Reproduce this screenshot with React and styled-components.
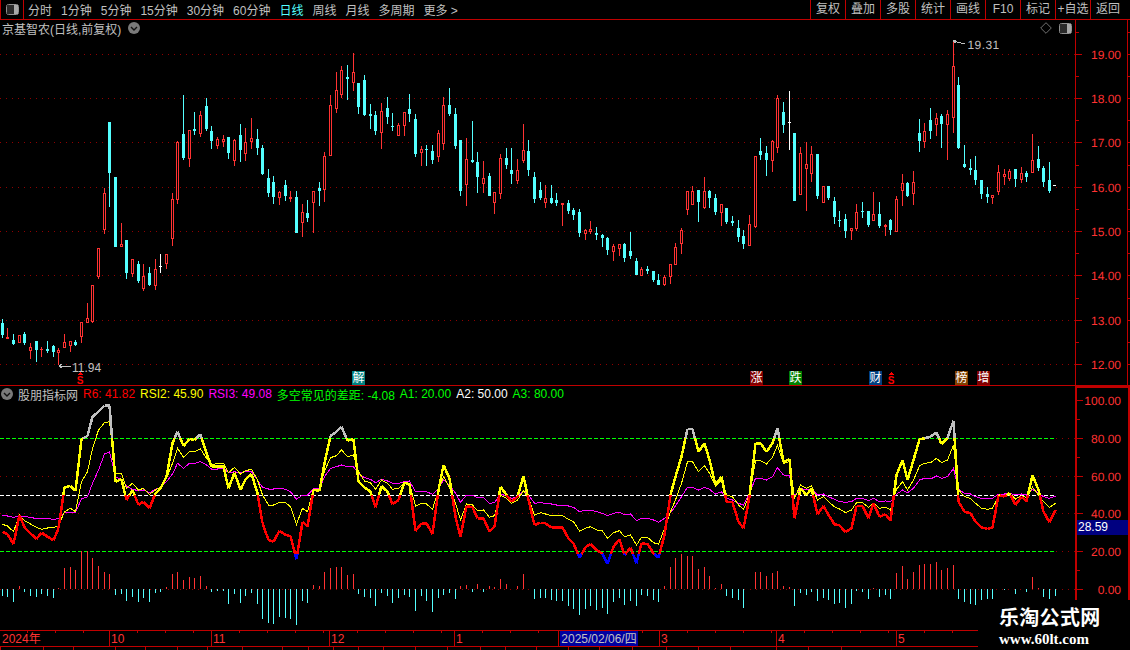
import React from "react";
import styled, { createGlobalStyle } from "styled-components";

const RED = "#ff3232";
const LINE = "#c00000";
const CYAN = "#54ffff";
const GREY = "#c0c0c0";
const FONT = `"Liberation Sans", "Noto Sans CJK SC", sans-serif`;

const GlobalStyle = createGlobalStyle`
  html, body {
    margin: 0;
    background: #000;
  }
`;

const Page = styled.div`
  position: relative;
  display: flex;
  flex-direction: column;
  width: 1130px;
  height: 650px;
  overflow: hidden;
  background: #000;
  color: ${GREY};
  font-family: ${FONT};
  font-size: 12px;
`;

const Toolbar = styled.div`
  display: flex;
  align-items: center;
  flex: none;
  height: 20px;
  box-sizing: border-box;
  border-bottom: 1px solid ${LINE};
  padding-right: 5px;
`;

const LayoutToggle = styled.div`
  display: flex;
  align-items: center;
  justify-content: center;
  width: 24px;
  height: 19px;
  box-sizing: border-box;
  border-left: 1px solid ${LINE};
  border-right: 1px solid ${LINE};
`;

const Periods = styled.div`
  display: flex;
  gap: 9px;
  margin-left: 4px;
`;

const Period = styled.span`
  color: ${(p) => (p.$active ? CYAN : GREY)};
  white-space: nowrap;
`;

const Actions = styled.div`
  display: flex;
  margin-left: auto;
`;

const Action = styled.div`
  width: 35px;
  height: 19px;
  box-sizing: border-box;
  border-left: 1px solid ${LINE};
  text-align: center;
  line-height: 19px;
  white-space: nowrap;
`;

const PriceRow = styled.div`
  display: flex;
  flex: none;
  height: 366px;
  box-sizing: border-box;
  border-bottom: 1px solid ${LINE};
`;

const IndicatorRow = styled.div`
  display: flex;
  flex: none;
  height: 244px;
`;

const Plot = styled.div`
  position: relative;
  display: flex;
  flex-direction: column;
  flex: none;
  width: 1075px;
`;

const Legend = styled.div`
  display: flex;
  align-items: center;
  flex: none;
  gap: ${(p) => p.$gap || 0}px;
  height: 18px;
  box-sizing: border-box;
  padding: 0 3px 2px ${(p) => p.$inset || 2}px;
  white-space: nowrap;
`;

const LegendName = styled.span`
  margin-right: ${(p) => p.$space || 0}px;
`;

const LegendValue = styled.span`
  color: ${(p) => p.$color};
`;

const LegendTools = styled.div`
  display: flex;
  align-items: center;
  gap: 7px;
  margin-left: auto;
`;

const Chart = styled.svg`
  display: block;
  flex: none;
  font-family: ${FONT};
  font-size: 12px;
`;

const Axis = styled.div`
  position: relative;
  flex: none;
  width: 55px;
`;

const Badge = styled.span`
  position: absolute;
  top: 351px;
  left: ${(p) => p.$x}px;
  width: 13px;
  height: 14px;
  background: ${(p) => p.$bg};
  color: #fff;
  font-size: 12px;
  line-height: 14px;
  text-align: center;
`;

const ValueTag = styled.div`
  position: absolute;
  top: 134px;
  left: 2px;
  right: 2px;
  height: 15px;
  padding-left: 1px;
  background: #000080;
  color: #fff;
  line-height: 15px;
`;

const TimeAxis = styled.div`
  position: relative;
  display: flex;
  flex: none;
  width: 978px;
  height: 17px;
  box-sizing: border-box;
  border-top: 1px solid ${LINE};
  border-bottom: 1px solid ${LINE};
`;

const TimeCell = styled.div`
  flex: none;
  width: ${(p) => p.$w}px;
  box-sizing: border-box;
  padding-left: ${(p) => (p.$first ? 2 : 1)}px;
  border-left: ${(p) => (p.$first ? "none" : `1px solid ${LINE}`)};
  background: repeating-linear-gradient(90deg, transparent 0 27px, ${LINE} 27px 28px) top left / 100% 2px no-repeat;
  color: ${RED};
  line-height: 16px;
`;

const SelectedDate = styled.div`
  position: absolute;
  top: 0;
  left: 560px;
  width: 78px;
  height: 15px;
  background: #0000a0;
  color: ${GREY};
  line-height: 16px;
  text-align: center;
`;

const StatusStrip = styled.div`
  display: flex;
  flex: 1;
  overflow: hidden;
`;

const StatusCell = styled.div`
  flex: none;
  width: ${(p) => p.$w}px;
  box-sizing: border-box;
  border-left: 1px solid ${LINE};
`;

const Watermark = styled.div`
  position: absolute;
  right: 0;
  bottom: 0;
  display: flex;
  flex-direction: column;
  width: 152px;
  height: 50px;
  box-sizing: border-box;
  padding: 6px 0 0 21px;
  background: #000;
  color: #fff;
  font-weight: 700;
  white-space: nowrap;
`;

const WatermarkTitle = styled.span`
  font-size: 20px;
  line-height: 24px;
  letter-spacing: 0.3px;
`;

const WatermarkUrl = styled.span`
  margin-top: 2px;
  font-family: "Liberation Serif", serif;
  font-size: 15px;
  line-height: 15px;
`;

const xAt = (i) => Math.floor(2.3 + i * 5.66);

// type, body top, body bottom, wick top, wick bottom (page pixels)
const candles = [
  ["c",323,335,319,338],["r",337,339,328,339],["c",340,344,334,345],["r",335,343,335,343],["c",334,343,332,345],
  ["r",347,351,343,359],["c",341,350,341,362],["r",349,350,347,357],["c",349,351,341,353],["c",346,352,345,357],
  ["r",350,353,348,365],["r",342,348,334,348],["r",341,346,341,352],["c",342,345,340,346],["r",322,337,322,343],
  ["r",318,323,303,323],["r",285,322,285,323],["r",248,277,248,279],["r",193,230,188,234],["c",122,173,122,207],
  ["c",177,247,177,247],["r",244,247,223,247],["c",240,273,240,279],["r",259,274,259,277],["c",264,281,261,283],
  ["r",276,289,264,291],["c",273,285,267,286],["r",269,286,259,290],["w",266,267,254,273],["r",254,264,254,269],
  ["r",199,239,193,246],["r",142,200,141,204],["c",134,158,95,160],["r",130,159,130,167],["c",129,131,112,135],
  ["r",115,134,111,137],["c",106,129,98,131],["c",131,141,126,149],["r",139,146,137,149],["r",139,142,135,147],
  ["c",137,153,137,159],["r",140,161,139,166],["c",135,150,124,162],["r",142,154,128,161],["r",138,142,118,149],
  ["c",139,148,129,155],["c",148,174,145,175],["c",178,193,169,197],["c",182,197,176,204],["r",192,198,191,205],
  ["c",185,196,180,201],["r",197,199,191,202],["c",197,233,191,233],["r",212,223,204,237],["c",213,218,200,222],
  ["r",191,203,191,233],["c",188,191,182,206],["r",156,190,152,202],["r",105,156,95,156],["r",90,109,72,113],
  ["r",70,95,66,98],["c",77,79,65,100],["r",72,83,53,91],["c",83,107,83,114],["c",80,115,75,116],
  ["c",114,116,104,129],["c",115,131,111,135],["r",111,133,103,149],["c",108,117,97,124],["c",126,127,113,131],
  ["r",125,136,123,136],["r",112,126,112,136],["c",109,114,94,122],["c",119,154,114,157],["r",149,153,146,166],
  ["c",149,150,145,166],["c",151,160,145,164],["r",133,157,130,162],["r",105,144,97,150],["c",105,114,88,116],
  ["c",114,146,108,149],["c",140,191,140,196],["r",159,185,138,206],["c",160,162,121,163],["c",162,177,152,193],
  ["r",178,184,161,193],["c",176,196,173,196],["r",192,203,192,214],["r",158,194,154,199],["c",158,165,148,169],
  ["c",170,174,148,184],["r",170,181,159,184],["r",150,161,124,163],["c",151,170,140,176],["c",177,199,172,203],
  ["c",190,198,182,200],["r",198,203,185,208],["c",198,203,185,204],["c",200,203,193,206],["r",203,205,203,226],
  ["c",203,211,200,214],["c",210,215,208,220],["c",212,233,209,237],["r",230,234,229,240],["r",229,232,221,234],
  ["c",233,235,227,240],["c",235,238,234,247],["c",238,250,237,255],["r",246,252,244,261],["r",244,249,244,256],
  ["c",244,258,243,262],["c",251,256,232,259],["c",261,275,258,275],["r",269,276,267,276],["c",269,271,266,274],
  ["c",271,280,271,282],["c",280,285,274,285],["r",277,285,275,286],["r",264,277,264,284],["r",247,265,243,265],
  ["r",230,244,228,254],["r",191,210,191,215],["r",191,205,186,205],["c",190,202,190,222],["r",191,208,177,209],
  ["c",191,198,190,208],["c",198,212,194,215],["r",204,213,204,226],["c",208,222,208,224],["c",221,223,216,226],
  ["c",228,237,220,242],["c",236,244,230,249],["r",224,246,215,246],["r",156,227,156,228],["c",151,155,138,160],
  ["c",153,160,146,176],["r",141,161,140,172],["r",98,148,95,153],["c",112,125,102,133],["w",122,123,91,150],
  ["c",133,201,133,201],["r",153,195,147,195],["r",164,169,142,211],["r",154,174,146,182],["c",154,196,154,199],
  ["r",186,203,186,203],["c",186,198,186,200],["c",201,217,197,224],["c",220,221,211,227],["c",219,231,214,238],
  ["r",228,231,228,240],["r",212,229,204,231],["c",211,212,202,218],["c",211,225,211,227],["r",214,221,192,221],
  ["c",214,226,202,228],["r",225,227,224,236],["c",220,230,219,235],["r",199,232,196,232],["r",183,191,174,206],
  ["c",183,196,182,197],["r",182,194,171,205],["c",133,141,119,152],["r",131,142,123,148],["c",120,131,108,139],
  ["r",118,125,113,136],["c",116,124,114,148],["r",114,125,110,160],["r",66,118,40,133],["c",85,148,77,149],
  ["c",164,167,145,168],["c",168,170,159,175],["c",170,180,156,185],["c",180,194,180,199],["c",194,197,187,203],
  ["r",195,198,195,204],["r",172,192,165,195],["r",174,177,169,185],["r",171,179,169,181],["c",169,179,169,187],
  ["r",173,180,167,183],["c",173,177,171,182],["r",160,173,134,173],["c",159,168,146,171],["c",168,182,166,187],
  ["c",180,191,162,193],
];

// RSI lines, traced at 3x from y = 400
const rsi6 = [
  395,403,432,345,382,400,417,398,410,421,385,262,258,272,117,108,50,35,17,17,
  245,238,300,270,315,305,325,280,265,230,130,95,138,117,120,103,160,200,200,200,
  265,218,270,238,222,280,370,420,425,392,405,408,478,365,380,270,272,190,108,95,
  80,122,118,245,262,275,322,258,275,313,300,248,253,393,370,370,402,270,195,235,
  350,410,318,322,355,355,395,380,260,285,305,290,228,300,375,368,370,383,383,383,
  415,430,473,442,432,450,462,492,440,418,465,443,490,430,432,460,473,405,285,230,
  170,87,87,155,130,180,255,230,305,307,365,385,290,130,130,155,130,85,185,178,
  355,265,285,265,343,318,345,373,376,397,385,318,318,355,310,350,343,362,225,180,
  240,180,118,115,110,97,132,115,62,305,335,340,365,382,387,382,285,290,280,315,
  290,305,225,270,335,367,330,
];

const rsi2 = [
  373,378,395,345,362,372,382,388,384,382,378,335,325,335,245,215,145,90,68,65,
  222,220,265,250,270,265,283,270,262,235,190,145,172,155,155,147,175,195,190,190,
  218,202,222,212,208,240,285,315,315,307,308,320,373,325,335,268,268,213,173,167,
  150,170,165,215,243,248,268,240,250,268,265,247,250,318,310,312,328,270,230,262,
  310,360,312,315,332,330,352,347,285,295,310,300,272,295,345,338,342,347,347,347,
  358,365,393,385,380,390,393,415,398,392,410,405,435,412,412,428,433,385,335,300,
  250,185,185,215,197,220,258,240,285,290,315,328,285,183,182,192,172,135,190,185,
  295,255,265,258,300,290,305,320,327,338,330,308,308,322,310,325,322,330,268,245,
  270,240,198,190,188,175,188,180,135,270,290,295,310,325,328,325,290,290,280,297,
  287,293,262,285,305,322,310,
];

const rsi3 = [
  346,348,352,348,350,352,356,356,356,358,356,338,337,337,297,290,250,210,162,155,
  230,240,258,268,272,270,278,268,262,245,222,190,205,190,190,185,195,207,207,205,
  218,215,218,215,215,240,262,267,267,265,268,275,298,285,285,266,265,230,205,200,
  195,200,200,220,233,238,248,238,243,250,250,245,243,275,275,275,283,265,240,255,
  280,307,285,285,293,293,310,308,282,288,295,290,272,285,310,308,310,312,315,315,
  318,322,335,330,330,335,340,347,340,337,345,342,362,355,355,360,367,355,338,318,
  290,262,262,270,262,268,282,275,295,300,310,315,280,235,235,240,230,203,225,227,
  288,265,270,268,285,282,290,298,305,307,305,295,295,302,295,305,303,305,283,270,
  278,265,240,235,237,228,235,230,205,268,280,282,290,295,295,295,282,282,280,285,
  282,285,268,280,290,295,288,
];

// signed bar heights around the zero line, up is red
const bars = [
  -7,-8,-13,3,-3,-7,-8,-5,-7,-9,1,21,22,19,38,38,31,23,17,15,
  -6,-5,-12,-8,-13,-9,-13,-4,-3,2,15,17,9,12,11,13,3,-3,-2,-2,
  -15,-5,-14,-7,-4,-15,-30,-34,-35,-28,-29,-30,-36,-12,-14,4,3,17,21,22,
  22,14,15,-5,-8,-9,-17,-4,-7,-14,-9,-6,-8,-22,-7,-12,-23,-9,-6,-4,
  -10,3,4,-3,5,-3,3,2,10,5,0,3,15,0,-10,-9,-9,-11,-12,-12,
  -17,-20,-26,-20,-17,-21,-19,-25,-13,-9,-16,-12,-17,-6,-7,-11,-13,3,22,31,
  35,33,33,20,22,13,1,5,-7,-9,-11,-19,0,17,17,13,16,18,3,2,
  -17,-4,-6,-3,-12,-9,-11,-15,-14,-19,-15,-2,-3,-10,1,-8,-6,-10,16,23,
  10,17,24,25,25,27,19,21,24,-10,-13,-15,-16,-11,-10,-10,0,-1,0,-5,
  0,-3,12,1,-8,-10,-7,
];

const ZERO_Y = 589;
const toY = (v) => 400 + v / 3;
const seriesPoints = (values) => values.map((v, i) => `${xAt(i) + 0.5},${toY(v).toFixed(1)}`).join(" ");

const BAND_LIMITS = [438.3, 495.3, 554];

const bandColor = (y) => {
  if (y < BAND_LIMITS[0]) return GREY;
  if (y < BAND_LIMITS[1]) return "#ffff00";
  if (y < BAND_LIMITS[2]) return "#ff0000";
  return "#0000ff";
};

// the RSI6 line takes its colour from the band it runs through
const rsi6Segments = () => {
  const out = [];
  for (let i = 0; i < rsi6.length - 1; i++) {
    const x1 = xAt(i) + 0.5;
    const x2 = xAt(i + 1) + 0.5;
    const y1 = toY(rsi6[i]);
    const y2 = toY(rsi6[i + 1]);
    const cuts = BAND_LIMITS.filter((l) => (y1 - l) * (y2 - l) < 0).map((l) => (l - y1) / (y2 - y1));
    const stops = [0, ...cuts.sort((a, b) => a - b), 1];
    for (let s = 0; s < stops.length - 1; s++) {
      const a = stops[s];
      const b = stops[s + 1];
      const mid = y1 + (y2 - y1) * ((a + b) / 2);
      out.push({
        x1: x1 + (x2 - x1) * a,
        y1: y1 + (y2 - y1) * a,
        x2: x1 + (x2 - x1) * b,
        y2: y1 + (y2 - y1) * b,
        color: bandColor(mid),
      });
    }
  }
  return out;
};

const priceGrid = [54, 98, 142, 187, 231, 275, 320, 364];
const priceLabels = ["19.00", "18.00", "17.00", "16.00", "15.00", "14.00", "13.00", "12.00"];
const rsiScale = [
  [400, "100.00"],
  [438, "80.00"],
  [476, "60.00"],
  [513, "40.00"],
  [551, "20.00"],
  [589, "0.00"],
];

const periods = ["分时", "1分钟", "5分钟", "15分钟", "30分钟", "60分钟", "日线", "周线", "月线", "多周期", "更多 >"];
const actions = ["复权", "叠加", "多股", "统计", "画线", "F10", "标记", "+自选", "返回"];
const legend = [
  ["#ff0000", "R6: 41.82"],
  ["#ffff00", "RSI2: 45.90"],
  ["#ff00ff", "RSI3: 49.08"],
  ["#00ff00", "多空常见的差距: -4.08"],
  ["#00ff00", "A1: 20.00"],
  ["#ffffff", "A2: 50.00"],
  ["#00ff00", "A3: 80.00"],
];
const badges = [
  [352, "#008080", "解"],
  [750, "#800000", "涨"],
  [789, "#008000", "跌"],
  [869, "#004080", "财"],
  [955, "#804000", "榜"],
  [977, "#800000", "增"],
];
const months = [
  [109, "2024年"],
  [102, "10"],
  [118, "11"],
  [125, "12"],
  [104, "1"],
  [101, ""],
  [117, "3"],
  [120, "4"],
  [82, "5"],
];
const stripCells = [
  43, 30, 42, 30, 32, 30, 35, 40, 26, 25, 25, 25, 32, 32, 33, 25, 31, 32, 31, 33, 34, 32, 32, 46, 32, 33, 106,
];

const PanelIcon = () => (
  <svg width="13" height="11" viewBox="0 0 13 11">
    <rect x="0.5" y="0.5" width="12" height="10" rx="2" fill="#111" stroke="#909090" />
    <rect x="8" y="1" width="4" height="9" fill="#a8a8a8" />
    <rect x="1" y="1" width="7" height="9" fill="#2a2a2a" />
  </svg>
);

const DropdownDot = () => (
  <svg width="12" height="12" viewBox="0 0 12 12">
    <circle cx="6" cy="6" r="6" fill="#7a7a7a" />
    <path d="M3 5 L6 8 L9 5" fill="none" stroke="#111" strokeWidth="1.4" />
  </svg>
);

const Diamond = () => (
  <svg width="12" height="12" viewBox="0 0 12 12">
    <path d="M6 0.7 L11.3 6 L6 11.3 L0.7 6 Z" fill="none" stroke="#707070" />
  </svg>
);

const Candle = ({ i, type, top, bottom, high, low }) => {
  const x = xAt(i);
  if (type === "r" && bottom - top > 2) {
    return (
      <g fill={RED}>
        <rect x={x} y={high} width="1" height={top - high} />
        <rect x={x} y={bottom} width="1" height={low - bottom} />
        <rect x={x - 0.5} y={top + 0.5} width="2" height={bottom - top - 1} fill="#000" stroke={RED} />
      </g>
    );
  }
  const color = type === "c" ? CYAN : type === "w" ? "#fff" : RED;
  return (
    <g fill={color}>
      <rect x={x} y={high} width="1" height={low - high} />
      <rect x={x - 1} y={top} width={3} height={Math.max(bottom - top, 1)} />
    </g>
  );
};

const SellMark = ({ x, y }) => (
  <g fill="#ff0000">
    <path d={`M${x} ${y} l3 3 h-6 Z`} />
    <text x={x} y={y + 12} textAnchor="middle" fontSize="10" fontWeight="700">
      S
    </text>
  </g>
);

const PriceChart = () => (
  <Chart width="1075" height="347" viewBox="0 38 1075 347" shapeRendering="crispEdges">
    {priceGrid.map((y) => (
      <line key={y} x1="0" x2="1075" y1={y + 0.5} y2={y + 0.5} stroke="#900000" strokeDasharray="1 5" />
    ))}
    {candles.map(([type, top, bottom, high, low], i) => (
      <Candle key={i} i={i} type={type} top={top} bottom={bottom} high={high} low={low} />
    ))}
    <rect x="1053" y="185" width="3" height="1" fill="#fff" />
    <path d="M953 41 L965 44 M953 41 l3 -1 M953 41 l3 2" fill="none" stroke={GREY} />
    <text x="967.5" y="49" fill={GREY} letterSpacing="0.4" textRendering="geometricPrecision">
      19.31
    </text>
    <path d="M59 366 L71 366 M59 366 l3 -2 M59 366 l3 2" fill="none" stroke={GREY} />
    <text x="72" y="371.5" fill={GREY}>
      11.94
    </text>
    <SellMark x={80} y={372} />
    <SellMark x={891} y={372} />
  </Chart>
);

const PriceAxis = () => (
  <Chart width="55" height="365" viewBox="1075 20 55 365" shapeRendering="crispEdges">
    <line x1="1075.5" x2="1075.5" y1="20" y2="385" stroke={LINE} />
    <line x1="1127.5" x2="1127.5" y1="20" y2="385" stroke={LINE} />
    {priceGrid.map((y, i) => (
      <g key={y} stroke={LINE}>
        <line x1="1076" x2="1082" y1={y + 0.5} y2={y + 0.5} />
        <line x1="1128" x2="1130" y1={y + 0.5} y2={y + 0.5} />
        <line x1="1076" x2="1079" y1={y - 21.5} y2={y - 21.5} />
        <line x1="1128" x2="1130" y1={y - 21.5} y2={y - 21.5} />
        <text x="1121" y={y + 4.5} textAnchor="end" fill={RED} stroke="none" textRendering="geometricPrecision">
          {priceLabels[i]}
        </text>
      </g>
    ))}
  </Chart>
);

const RsiChart = () => (
  <Chart width="1075" height="226" viewBox="0 404 1075 226">
    <g shapeRendering="crispEdges">
      {rsiScale.map(([y]) => (
        <line key={y} x1="0" x2="1075" y1={y + 0.5} y2={y + 0.5} stroke="#900000" strokeDasharray="1 5" />
      ))}
      <line x1="0" x2="1056" y1="438.5" y2="438.5" stroke="#00ff00" strokeDasharray="4 2" />
      <line x1="0" x2="1056" y1="495.5" y2="495.5" stroke="#fff" strokeDasharray="4 2" />
      <line x1="0" x2="1056" y1="551.5" y2="551.5" stroke="#00ff00" strokeDasharray="4 2" />
      {bars.map((v, i) =>
        v === 0 ? null : (
          <rect
            key={i}
            x={xAt(i)}
            y={v > 0 ? ZERO_Y - v : ZERO_Y}
            width="1"
            height={Math.abs(v)}
            fill={v > 0 ? RED : CYAN}
          />
        )
      )}
      <polyline points={seriesPoints(rsi3)} fill="none" stroke="#ff00ff" />
      <polyline points={seriesPoints(rsi2)} fill="none" stroke="#ffff00" />
      {rsi6Segments().map((s, i) => (
        <line key={i} x1={s.x1} y1={s.y1} x2={s.x2} y2={s.y2} stroke={s.color} strokeWidth="2.5" />
      ))}
    </g>
  </Chart>
);

const RsiAxis = () => (
  <Chart width="55" height="244" viewBox="1075 386 55 244" shapeRendering="crispEdges">
    <rect x="1075" y="386" width="2" height="244" fill={LINE} />
    <rect x="1075" y="386" width="55" height="2" fill={LINE} />
    <rect x="1128" y="386" width="2" height="244" fill={LINE} />
    {rsiScale.map(([y, label]) => (
      <g key={y}>
        <rect x="1077" y={y} width="6" height="1" fill={LINE} />
        <rect x="1077" y={y + 19} width="3" height="1" fill={LINE} />
        <text x="1121" y={y + 4.5} textAnchor="end" fill={RED} textRendering="geometricPrecision">
          {label}
        </text>
      </g>
    ))}
  </Chart>
);

export default function App() {
  return (
    <Page>
      <GlobalStyle />
      <Toolbar>
        <LayoutToggle>
          <PanelIcon />
        </LayoutToggle>
        <Periods>
          {periods.map((p) => (
            <Period key={p} $active={p === "日线"}>
              {p}
            </Period>
          ))}
        </Periods>
        <Actions>
          {actions.map((a) => (
            <Action key={a}>{a}</Action>
          ))}
        </Actions>
      </Toolbar>

      <PriceRow>
        <Plot>
          <Legend>
            <LegendName $space={7}>京基智农(日线,前复权)</LegendName>
            <DropdownDot />
            <LegendTools>
              <Diamond />
              <PanelIcon />
            </LegendTools>
          </Legend>
          <PriceChart />
          {badges.map(([x, bg, label]) => (
            <Badge key={label} $x={x} $bg={bg}>
              {label}
            </Badge>
          ))}
        </Plot>
        <Axis>
          <PriceAxis />
        </Axis>
      </PriceRow>

      <IndicatorRow>
        <Plot>
          <Legend $gap={5} $inset={1}>
            <DropdownDot />
            <LegendName>股朋指标网</LegendName>
            {legend.map(([color, text]) => (
              <LegendValue key={text} $color={color}>
                {text}
              </LegendValue>
            ))}
          </Legend>
          <RsiChart />
        </Plot>
        <Axis>
          <RsiAxis />
          <ValueTag>28.59</ValueTag>
        </Axis>
      </IndicatorRow>

      <TimeAxis>
        {months.map(([w, label], i) => (
          <TimeCell key={i} $w={w} $first={i === 0}>
            {label}
          </TimeCell>
        ))}
        <SelectedDate>2025/02/06/四</SelectedDate>
      </TimeAxis>

      <StatusStrip>
        {stripCells.map((w, i) => (
          <StatusCell key={i} $w={w} />
        ))}
      </StatusStrip>

      <Watermark>
        <WatermarkTitle>乐淘公式网</WatermarkTitle>
        <WatermarkUrl>www.60lt.com</WatermarkUrl>
      </Watermark>
    </Page>
  );
}
